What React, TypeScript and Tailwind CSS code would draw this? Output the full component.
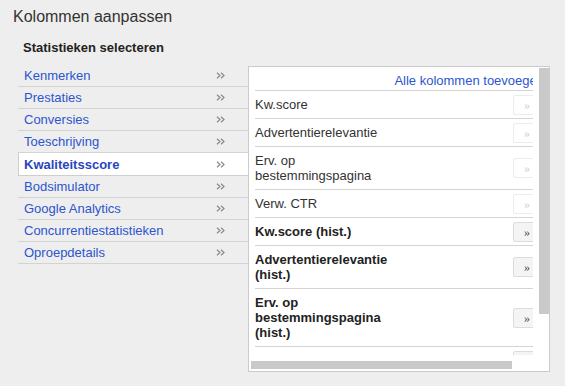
import React from "react";

const leftItems = [
  "Kenmerken",
  "Prestaties",
  "Conversies",
  "Toeschrijving",
  "Kwaliteitsscore",
  "Bodsimulator",
  "Google Analytics",
  "Concurrentiestatistieken",
  "Oproepdetails",
];

type Row = { lines: string[]; bold: boolean };

const rows: Row[] = [
  { lines: ["Kw.score"], bold: false },
  { lines: ["Advertentierelevantie"], bold: false },
  { lines: ["Erv. op", "bestemmingspagina"], bold: false },
  { lines: ["Verw. CTR"], bold: false },
  { lines: ["Kw.score (hist.)"], bold: true },
  { lines: ["Advertentierelevantie", "(hist.)"], bold: true },
  { lines: ["Erv. op", "bestemmingspagina", "(hist.)"], bold: true },
  { lines: ["Verw. CTR (hist.)"], bold: true },
];

function Chevrons() {
  return (
    <svg width="9" height="7" viewBox="0 0 9 7" className="block">
      <path d="M1 0.8 L4 3.5 L1 6.2" fill="none" stroke="#8a8a8a" strokeWidth="1.2" />
      <path d="M5 0.8 L8 3.5 L5 6.2" fill="none" stroke="#8a8a8a" strokeWidth="1.2" />
    </svg>
  );
}

export default function App() {
  const selected = "Kwaliteitsscore";
  return (
    <div className="w-[565px] h-[386px] bg-[#eeeeee] font-['Liberation_Sans',Arial,sans-serif] text-[#333] overflow-hidden">
      <div className="pl-[13px] pt-[8px] text-[16px] leading-[18px] text-[#333]">Kolommen aanpassen</div>
      <div className="pl-[23px] mt-[14px] text-[13px] leading-[15px] font-bold text-[#222]">
        Statistieken selecteren
      </div>
      <div className="flex items-start mt-[10px]">
        <div className="ml-[18px] w-[230px]">
          {leftItems.map((item) => {
            const isSel = item === selected;
            return (
              <div
                key={item}
                className={
                  isSel
                    ? "flex items-center h-[23px] bg-white border-l border-b border-[#cfcfcf] pl-[5px] text-[13px] leading-[15px] font-bold text-[#2a45bd]"
                    : "flex items-center h-[22px] border-b border-[#d3d3d3] pl-[6px] text-[13px] leading-[15px] text-[#2c55cf]"
                }
              >
                <span>{item}</span>
                <span className="ml-auto mr-[23px]">
                  <Chevrons />
                </span>
              </div>
            );
          })}
        </div>
        <div className="mt-[1px] w-[302px] h-[306px] bg-white border border-[#cbcbcb] flex flex-col">
          <div className="flex h-[288px]">
            <div className="w-[284px] h-[288px] overflow-hidden">
              <div className="ml-[6px] w-[290px]">
                <div className="flex items-center justify-end h-[24px] pt-[3px] border-b border-[#d4d4d4] text-[13px] leading-[15px] text-[#2c55cf] whitespace-nowrap pr-[1px]">
                  Alle kolommen toevoegen
                </div>
                {rows.map((r, i) => (
                  <div
                    key={i}
                    className={
                      "flex items-center justify-between py-[6px] border-b border-[#d4d4d4] text-[13px] leading-[15px] " +
                      (r.bold ? "font-bold text-[#222]" : "text-[#333]")
                    }
                  >
                    <div>
                      {r.lines.map((l, j) => (
                        <div key={j}>{l}</div>
                      ))}
                    </div>
                    <div
                      className={
                        r.bold
                          ? "-my-[3px] mr-[4px] w-[28px] h-[20px] rounded-[2px] border border-[#dcdcdc] bg-[#f4f4f4] flex items-center justify-center text-[12px] leading-none font-normal text-[#444] font-['Liberation_Serif',serif]"
                          : "-my-[3px] mr-[4px] w-[28px] h-[20px] rounded-[2px] border border-[#ececec] bg-white flex items-center justify-center text-[12px] leading-none font-normal text-[#cccccc] font-['Liberation_Serif',serif]"
                      }
                    >
                      »
                    </div>
                  </div>
                ))}
              </div>
            </div>
            <div className="pl-[6px] pt-[1px]">
              <div className="w-[10px] h-[246px] bg-[#c9c9c9]" />
            </div>
          </div>
          <div className="pt-[6px] pl-[2px]">
            <div className="w-[261px] h-[8px] bg-[#c9c9c9]" />
          </div>
        </div>
      </div>
    </div>
  );
}
